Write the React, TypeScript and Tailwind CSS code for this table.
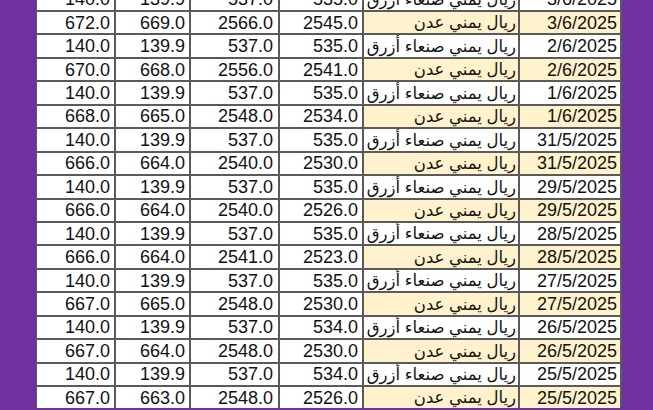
import React from "react";

const S = "ريال يمني صنعاء أزرق";
const A = "ريال يمني عدن";

const rows: [string, string, string, string, string, string][] = [
  ["140.0", "139.9", "537.0", "535.0", S, "3/6/2025"],
  ["672.0", "669.0", "2566.0", "2545.0", A, "3/6/2025"],
  ["140.0", "139.9", "537.0", "535.0", S, "2/6/2025"],
  ["670.0", "668.0", "2556.0", "2541.0", A, "2/6/2025"],
  ["140.0", "139.9", "537.0", "535.0", S, "1/6/2025"],
  ["668.0", "665.0", "2548.0", "2534.0", A, "1/6/2025"],
  ["140.0", "139.9", "537.0", "535.0", S, "31/5/2025"],
  ["666.0", "664.0", "2540.0", "2530.0", A, "31/5/2025"],
  ["140.0", "139.9", "537.0", "535.0", S, "29/5/2025"],
  ["666.0", "664.0", "2540.0", "2526.0", A, "29/5/2025"],
  ["140.0", "139.9", "537.0", "535.0", S, "28/5/2025"],
  ["666.0", "664.0", "2541.0", "2523.0", A, "28/5/2025"],
  ["140.0", "139.9", "537.0", "535.0", S, "27/5/2025"],
  ["667.0", "665.0", "2548.0", "2530.0", A, "27/5/2025"],
  ["140.0", "139.9", "537.0", "534.0", S, "26/5/2025"],
  ["667.0", "664.0", "2548.0", "2530.0", A, "26/5/2025"],
  ["140.0", "139.9", "537.0", "534.0", S, "25/5/2025"],
  ["667.0", "663.0", "2548.0", "2526.0", A, "25/5/2025"],
];

export default function App() {
  return (
    <div className="w-[653px] h-[410px] overflow-hidden bg-[#7030a0]">
      <div className="ml-[36px] w-[586px] mt-[-11.44px] bg-[#5a5a5a] pl-[1px] pr-[2px]">
        <div className="grid grid-cols-[77px_73px_87px_82px_154px_100px] auto-rows-[21.44px] gap-[2px] font-['Liberation_Sans',Arial,sans-serif] text-[18px] text-[#111]">
          {rows.map((r, i) => {
            const aden = r[4] === A;
            return (
              <React.Fragment key={i}>
                <div className="bg-white flex items-center justify-end pr-[4px] leading-none">{r[0]}</div>
                <div className="bg-white flex items-center justify-end pr-[4px] leading-none">{r[1]}</div>
                <div className="bg-white flex items-center justify-end pr-[5px] leading-none">{r[2]}</div>
                <div className="bg-white flex items-center justify-end pr-[4px] leading-none">{r[3]}</div>
                <div
                  dir="rtl"
                  className={`${aden ? "bg-[#fff2cc]" : "bg-white"} flex items-center justify-start pr-[2px] leading-none whitespace-nowrap overflow-hidden text-[16.5px] font-['Liberation_Sans','DejaVu_Sans',sans-serif]`}
                >
                  {r[4]}
                </div>
                <div className={`${aden ? "bg-[#fff2cc]" : "bg-white"} flex items-center justify-end pr-[3px] leading-none`}>{r[5]}</div>
              </React.Fragment>
            );
          })}
        </div>
      </div>
    </div>
  );
}
